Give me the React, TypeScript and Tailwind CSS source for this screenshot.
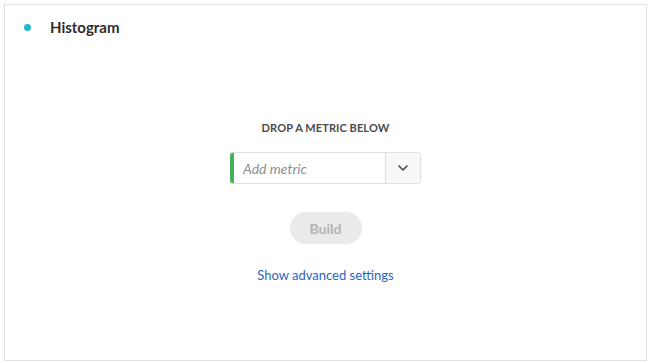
import { ChevronDown } from 'lucide-react';

export default function App() {
  return (
    <div className="h-[363px] w-[650px] bg-white pt-[4px] pl-[4px] pr-[3px] pb-[2px] font-['Lato',sans-serif]">
      <div className="flex h-full flex-col border border-[#e1e1e1] bg-white">
        {/* Header */}
        <div className="flex items-center pl-[19px] pt-[12px]">
          <span className="h-[7px] w-[7px] rounded-full bg-[#1fb9c5]" />
          <h1 className="ml-[19px] text-[15px] font-bold leading-[20px] text-[#2c2c2c]">Histogram</h1>
        </div>

        {/* Body */}
        <div className="flex flex-col items-center pt-[84px]">
          <div className="text-[11px] font-bold uppercase leading-[14px] tracking-[0.1px] text-[#4b4b4b]">
            Drop a metric below
          </div>

          <div className="mt-[17px] flex h-[32px] w-[191px] overflow-hidden rounded-[4px] border border-[#e1e1e1] border-l-[4px] border-l-[#44b556]">
            <div className="flex flex-1 items-center pl-[9px] text-[14px] italic text-[#8e8e8e]">Add metric</div>
            <button className="flex w-[35px] items-center justify-center border-l border-[#e1e1e1] bg-[#f8f8f8] text-[#4b4b4b]">
              <ChevronDown size={16} strokeWidth={2.5} />
            </button>
          </div>

          <button className="mt-[28px] h-[32px] w-[72px] rounded-full bg-[#eaeaea] text-[14px] font-bold text-[#b3b3b3]">
            Build
          </button>

          <a className="mt-[22px] text-[13px] leading-[18px] text-[#2a64c5]">Show advanced settings</a>
        </div>
      </div>
    </div>
  );
}
